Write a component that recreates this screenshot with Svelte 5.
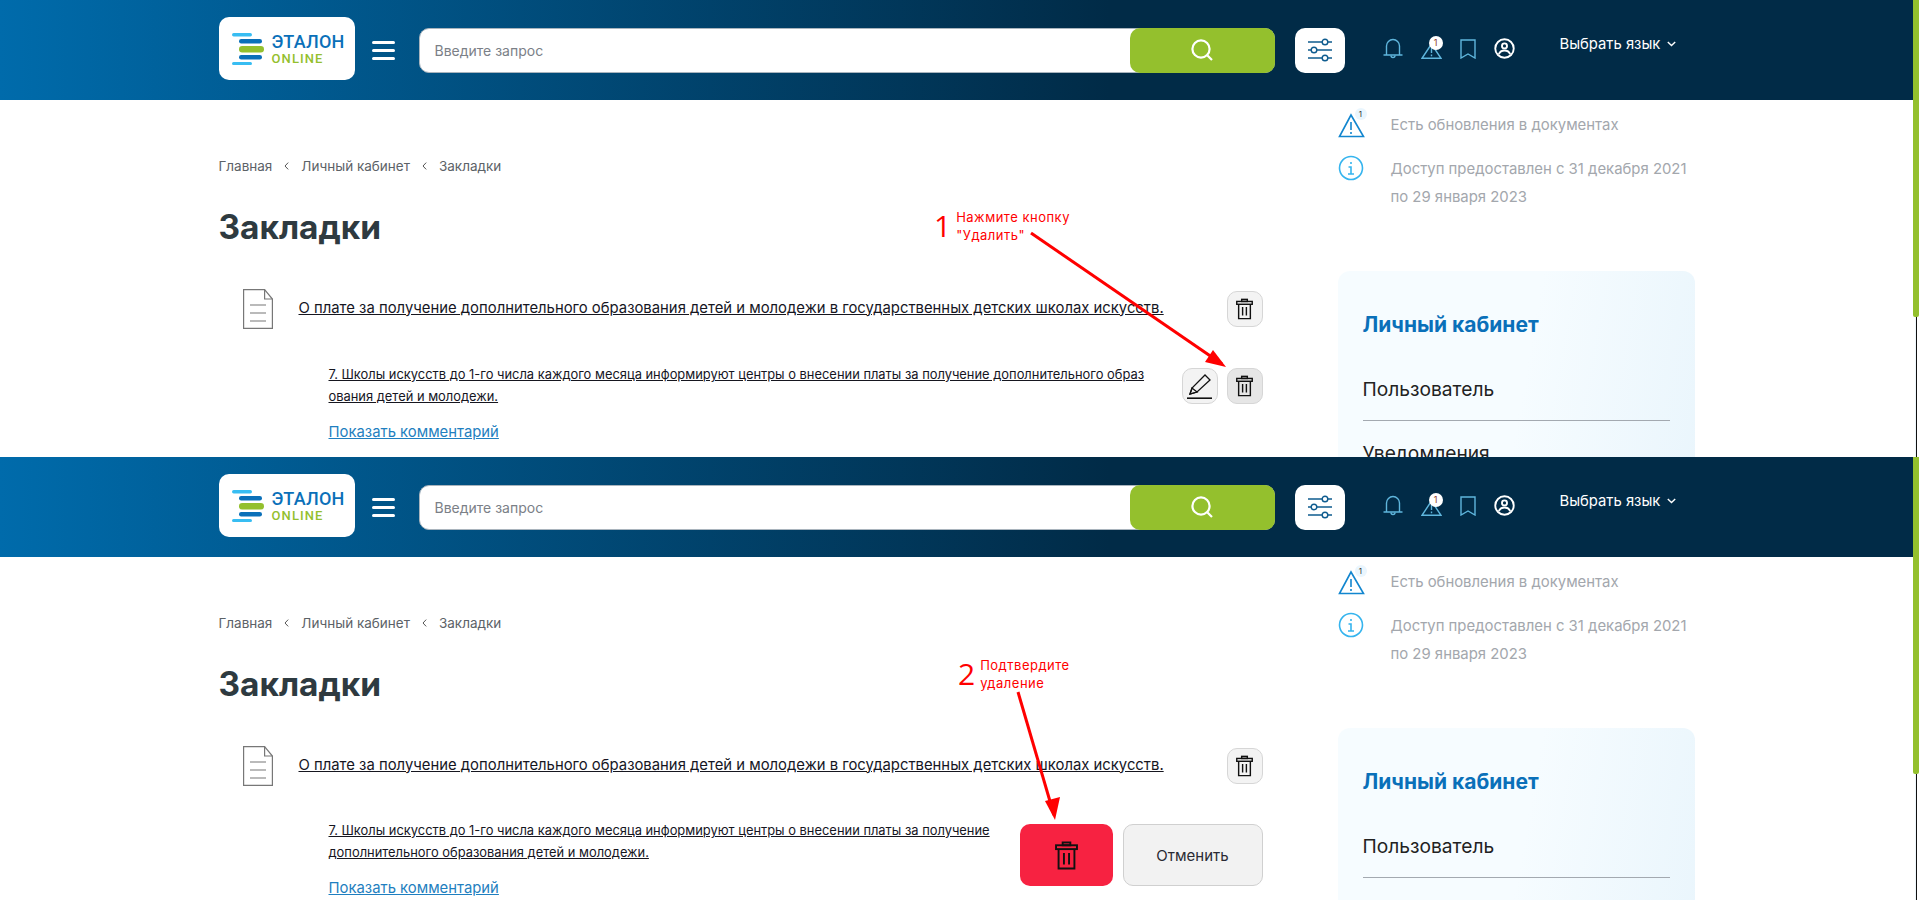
<script>
    const panels = [
        {
            id: "one",
            num: "1",
            hint: ["Нажмите кнопку", '"Удалить"'],
            confirm: false,
            arrow: { x1: 1031, y1: 233, x2: 1222, y2: 364, head: "1226,367 1205,362 1213,350" },
        },
        {
            id: "two",
            num: "2",
            hint: ["Подтвердите", "удаление"],
            confirm: true,
            arrow: { x1: 1018, y1: 235, x2: 1054, y2: 358, head: "1055,363 1045,344 1060,340" },
        },
    ];
    const subText =
        "7. Школы искусств до 1-го числа каждого месяца информируют центры о внесении платы за получение дополнительного образования детей и молодежи.";
</script>

{#snippet trash(w, h)}
    <svg width={w} height={h} viewBox="0 0 18 22" fill="none" stroke="currentColor" stroke-width="1.5">
        <rect x="6" y="0.8" width="6" height="2.2" />
        <rect x="0.8" y="3" width="16.4" height="3" />
        <path d="M2.8 6v15.2h12.4V6" />
        <path d="M7 9v9M11 9v9" />
    </svg>
{/snippet}

{#each panels as p}
    <section class="shot {p.id}">
        <div class="view">
            <header class="topbar">
                <div class="topbar-inner">
                    <div class="logo">
                        <svg class="logo-mark" width="32" height="32" viewBox="0 0 32 32">
                            <rect x="0" y="0" width="20" height="3.5" rx="1.7" fill="#38bdf2" />
                            <rect x="7" y="6" width="23" height="4.5" rx="2.2" fill="#0a70b9" />
                            <rect x="7" y="13" width="25" height="6.5" rx="3.2" fill="#94c02d" />
                            <rect x="7" y="22" width="23" height="4.5" rx="2.2" fill="#0a70b9" />
                            <rect x="0" y="29" width="20" height="3" rx="1.5" fill="#38bdf2" />
                        </svg>
                        <div class="logo-text">
                            <span class="logo-top">ЭТАЛОН</span>
                            <span class="logo-sub">ONLINE</span>
                        </div>
                    </div>
                    <div class="burger"><i></i><i></i><i></i></div>
                    <div class="search">
                        <span class="search-input">Введите запрос</span>
                        <div class="search-btn">
                            <svg width="24" height="24" viewBox="0 0 24 24" fill="none" stroke="#fff" stroke-width="2.2">
                                <circle cx="11" cy="11" r="8.6" />
                                <path d="M17.5 17.5l4.5 4.5" />
                            </svg>
                        </div>
                    </div>
                    <div class="filter">
                        <svg width="26" height="24" viewBox="0 0 26 24" fill="none" stroke="#0f5c8f" stroke-width="1.4">
                            <path d="M1 4h14M21 4h4M1 12h3M10 12h15M1 20h14M21 20h4" />
                            <circle cx="18" cy="4" r="2.8" />
                            <circle cx="7" cy="12" r="2.8" />
                            <circle cx="18" cy="20" r="2.8" />
                        </svg>
                    </div>
                    <div class="tools">
                        <svg width="20" height="21" viewBox="0 0 20 21" fill="none" stroke="#5fb6dd" stroke-width="1.4">
                            <path d="M3.5 17V8a6.5 6.5 0 0 1 13 0v9M0.5 17h19" />
                            <path d="M8 17.5a2 2 0 0 0 4 0" />
                        </svg>
                        <div class="warn">
                            <svg width="21" height="20" viewBox="0 0 21 20" fill="none" stroke="#5fb6dd" stroke-width="1.4">
                                <path d="M10.5 5L1 19.3h19z" />
                                <path d="M10.5 9v5M10.5 15.5v1.8" />
                            </svg>
                            <span class="warn-badge">1</span>
                        </div>
                        <svg width="16" height="20" viewBox="0 0 16 20" fill="none" stroke="#5fb6dd" stroke-width="1.4">
                            <path d="M1 1h14v18l-7-4-7 4z" />
                        </svg>
                        <svg width="21" height="21" viewBox="0 0 20 20" fill="none" stroke="#fff" stroke-width="1.8">
                            <circle cx="10" cy="10" r="8.8" />
                            <circle cx="10" cy="7.5" r="2.4" />
                            <path d="M4.6 15.5c1-2.6 2.8-3.6 5.4-3.6s4.4 1 5.4 3.6" />
                        </svg>
                    </div>
                    <div class="lang">
                        Выбрать язык
                        <svg width="9" height="6" viewBox="0 0 9 6" fill="none" stroke="#fff" stroke-width="1.4">
                            <path d="M0.8 1l3.7 3.6L8.2 1" />
                        </svg>
                    </div>
                </div>
            </header>

            <div class="columns">
                <main class="main">
                    <nav class="crumbs">
                        <span>Главная</span>
                        <svg width="5" height="8" viewBox="0 0 5 8" fill="none" stroke="#555" stroke-width="1"><path d="M4.2 0.6L1 4l3.2 3.4" /></svg>
                        <span>Личный кабинет</span>
                        <svg width="5" height="8" viewBox="0 0 5 8" fill="none" stroke="#555" stroke-width="1"><path d="M4.2 0.6L1 4l3.2 3.4" /></svg>
                        <span>Закладки</span>
                    </nav>
                    <h1>Закладки</h1>

                    <div class="doc-row">
                        <svg class="doc-icon" width="30" height="40" viewBox="0 0 30 40" fill="none" stroke="#777" stroke-width="1.2">
                            <path d="M0.6 0.6h21l7.8 9.4v29.4H0.6z" />
                            <path d="M21.6 0.6v9.4h7.8" />
                            <path d="M7 16h16M7 24h16M7 32h16" />
                        </svg>
                        <a class="doc-link">О плате за получение дополнительного образования детей и молодежи в государственных детских школах искусств.</a>
                        <button class="icon-btn">{@render trash(17, 22)}</button>
                    </div>

                    <div class="sub-row" class:confirm={p.confirm}>
                        <div class="sub-body">
                            <a class="sub-link">{subText}</a>
                            <a class="show-comment">Показать комментарий</a>
                        </div>
                        {#if p.confirm}
                            <div class="confirm-btns">
                                <button class="del-btn">{@render trash(23, 29)}</button>
                                <button class="cancel-btn">Отменить</button>
                            </div>
                        {:else}
                            <div class="row-btns">
                                <button class="icon-btn">
                                    <svg width="25" height="26" viewBox="0 0 25 26" fill="none" stroke="#111" stroke-width="1.3">
                                        <path d="M3 21l2-6L18 2l5 5-13 12z" />
                                        <path d="M3 21l2-6 5 4z" />
                                        <path d="M0 25.2h25" stroke-width="1.6" />
                                    </svg>
                                </button>
                                <button class="icon-btn active">{@render trash(17, 22)}</button>
                            </div>
                        {/if}
                    </div>
                </main>

                <aside class="side">
                    <div class="notice">
                        <div class="notice-icon">
                            <svg width="27" height="26" viewBox="0 0 27 26" fill="none" stroke="#1286cf" stroke-width="1.6">
                                <path d="M13 3L1.5 24.5h24z" />
                                <path d="M13 10v8M13 20v2" />
                            </svg>
                            <span class="notice-badge">1</span>
                        </div>
                        <span>Есть обновления в документах</span>
                    </div>
                    <div class="notice info">
                        <div class="notice-icon">
                            <svg width="26" height="26" viewBox="0 0 26 26" fill="none" stroke="#35b4ee" stroke-width="1.6">
                                <circle cx="13" cy="13" r="11.5" />
                                <path d="M13 7v2M10.5 12H13v7M10 19h6" />
                            </svg>
                        </div>
                        <span>Доступ предоставлен с 31 декабря 2021<br />по 29 января 2023</span>
                    </div>
                    <div class="card">
                        <h2>Личный кабинет</h2>
                        <div class="card-item">Пользователь</div>
                        <div class="card-item">Уведомления</div>
                    </div>
                </aside>
            </div>
        </div>

        <div class="scrollbar"><div class="thumb"></div></div>

        <!-- annotations drawn on top of the page -->
        <div class="note">
            <span class="note-num">{p.num}</span>
            <span class="note-text">{p.hint[0]}<br />{p.hint[1]}</span>
        </div>
        <svg class="arrow" width="1919" height="457">
            <line x1={p.arrow.x1} y1={p.arrow.y1} x2={p.arrow.x2} y2={p.arrow.y2} stroke="#f00" stroke-width="3" />
            <polygon points={p.arrow.head} fill="#f00" />
        </svg>
    </section>
{/each}

<style>
    :global(body) {
        margin: 0;
        background: #fff;
        font-family: Inter, "Noto Sans", sans-serif;
    }

    .shot {
        position: relative;
        display: flex;
        overflow: hidden;
        width: 1919px;
    }
    .shot.one {
        height: 457px;
    }
    .shot.two {
        height: 443px;
    }
    .view {
        flex: 1;
        min-width: 0;
    }

    /* scrollbar */
    .scrollbar {
        width: 6px;
        background: linear-gradient(90deg, #fff 0 2px, #eef6fb 2px 3px, #111 3px 4.5px, #fff 4.5px);
    }
    .thumb {
        height: 317px;
        background: #94c02d;
        border-radius: 0 0 2px 2px;
    }

    /* top bar */
    .topbar {
        height: 100px;
        background: linear-gradient(90deg, #006bab 0, #012b47 58%);
    }
    .topbar-inner {
        width: 1476px;
        height: 100px;
        margin: 0 auto;
        display: flex;
        align-items: center;
    }
    .logo {
        width: 136px;
        height: 63px;
        margin-top: -3px;
        background: #fff;
        border-radius: 10px;
        display: flex;
        align-items: center;
        gap: 8px;
        padding-left: 13px;
        box-sizing: border-box;
    }
    .logo-text {
        display: flex;
        flex-direction: column;
        line-height: 1;
    }
    .logo-top {
        font-family: Roboto, sans-serif;
        font-weight: 500;
        font-size: 18px;
        color: #0a70b9;
        letter-spacing: 0.2px;
    }
    .logo-sub {
        font-family: Roboto, sans-serif;
        font-weight: 500;
        font-size: 13px;
        letter-spacing: 1.1px;
        color: #94c02d;
        margin-top: 1px;
    }
    .burger {
        width: 23px;
        margin-left: 17px;
        display: flex;
        flex-direction: column;
        gap: 5px;
    }
    .burger i {
        height: 3px;
        border-radius: 2px;
        background: #fff;
    }
    .search {
        width: 856px;
        height: 45px;
        margin-left: 24px;
        display: flex;
        align-items: stretch;
        background: #fff;
        border: 1px solid #a9b4bd;
        border-radius: 10px;
        box-sizing: border-box;
    }
    .search-input {
        flex: 1;
        align-self: center;
        padding-left: 15px;
        font-size: 14px;
        color: #7b8087;
    }
    .search-btn {
        width: 145px;
        margin: -1px;
        background: #94c02d;
        border-radius: 10px;
        display: flex;
        align-items: center;
        justify-content: center;
    }
    .filter {
        width: 50px;
        height: 45px;
        margin-left: 20px;
        background: #fff;
        border-radius: 10px;
        display: flex;
        align-items: center;
        justify-content: center;
    }
    .tools {
        margin-left: 38px;
        display: flex;
        align-items: center;
        gap: 18px;
        margin-top: -3px;
    }
    .warn {
        position: relative;
        height: 20px;
    }
    .warn-badge {
        position: absolute;
        top: -3px;
        right: -1px;
        width: 14px;
        height: 14px;
        border-radius: 50%;
        background: #fff;
        color: #8a3b2a;
        font-size: 9px;
        line-height: 14px;
        text-align: center;
    }
    .lang {
        margin-left: 45px;
        margin-bottom: 12px;
        color: #fff;
        font-size: 14.8px;
        display: flex;
        align-items: center;
        gap: 7px;
        white-space: nowrap;
    }

    /* page body */
    .columns {
        width: 1476px;
        margin: 0 auto;
        display: flex;
        justify-content: space-between;
    }
    .main {
        width: 1044px;
        padding-top: 58px;
    }
    .crumbs {
        display: flex;
        align-items: center;
        gap: 12px;
        height: 16px;
        font-size: 13.5px;
        color: #5c6267;
    }
    h1 {
        margin: 31px 0 0;
        height: 52px;
        font-size: 33.4px;
        line-height: 44px;
        font-weight: 700;
        color: #2e3a40;
    }
    .doc-row {
        display: flex;
        align-items: center;
        height: 44px;
        margin-top: 30px;
        padding-left: 24px;
    }
    .doc-link {
        flex: 1;
        margin: 0 0 3px 26px;
        font-size: 14.85px;
        color: #16161f;
        text-decoration: underline;
        white-space: nowrap;
    }
    .icon-btn {
        width: 36px;
        height: 36px;
        padding: 0;
        border: 1px solid #d6d6d6;
        border-radius: 10px;
        background: #f3f3f3;
        color: #111;
        display: flex;
        align-items: center;
        justify-content: center;
    }
    .icon-btn.active {
        background: #e6e6e6;
    }
    .sub-row {
        display: flex;
        margin-top: 33px;
        padding-left: 110px;
    }
    .sub-row.confirm {
        margin-top: 32px;
    }
    .sub-body {
        width: 820px;
    }
    .confirm .sub-body {
        width: 680px;
    }
    .sub-link {
        display: block;
        font-size: 12.9px;
        line-height: 22px;
        color: #16161f;
        text-decoration: underline;
        word-break: break-all;
    }
    .confirm .sub-link {
        word-break: normal;
    }
    .show-comment {
        display: block;
        margin-top: 15px;
        font-size: 14.85px;
        color: #1f7fc0;
        text-decoration: underline;
    }
    .row-btns {
        margin-left: auto;
        margin-top: 4px;
        display: flex;
        gap: 9px;
    }
    .confirm-btns {
        margin-left: auto;
        display: flex;
        gap: 10px;
        margin-top: 4px;
    }
    .del-btn {
        width: 93px;
        height: 62px;
        padding: 0;
        border: 0;
        border-radius: 10px;
        background: #f72241;
        color: #111;
        display: flex;
        align-items: center;
        justify-content: center;
    }
    .cancel-btn {
        width: 140px;
        height: 62px;
        border: 1px solid #d0d0d0;
        border-radius: 10px;
        background: #f2f2f2;
        color: #2a2a33;
        font-family: Inter, sans-serif;
        font-size: 15px;
    }

    /* right column */
    .side {
        width: 357px;
        padding-top: 11px;
        padding-left: 12px;
        margin-left: -12px;
    }
    .notice {
        display: flex;
        align-items: center;
        gap: 26px;
        font-size: 14.9px;
        line-height: 28px;
        color: #a3a7ad;
    }
    .notice.info {
        margin-top: 16px;
        align-items: flex-start;
    }
    .notice-icon {
        position: relative;
        width: 27px;
        height: 26px;
        flex: none;
    }
    .notice-badge {
        position: absolute;
        top: -4px;
        right: -2px;
        width: 12px;
        height: 12px;
        border-radius: 50%;
        background: #eaf6fe;
        color: #333;
        font-size: 8px;
        line-height: 12px;
        text-align: center;
    }
    .card {
        margin-top: 60px;
        height: 300px;
        padding: 0 25px;
        background: linear-gradient(100deg, #f6fcff 50%, #e9f5fc);
        border-radius: 12px;
        overflow: hidden;
    }
    h2 {
        margin: 0;
        padding-top: 42px;
        font-size: 21px;
        line-height: 24px;
        font-weight: 700;
        color: #0a70b9;
    }
    .card-item {
        padding: 40px 0 19px;
        border-bottom: 1px solid #a3a9b0;
        font-size: 19.2px;
        line-height: 24px;
        color: #222;
    }
    .card-item + .card-item {
        padding-top: 20px;
    }

    /* annotations */
    .note {
        position: absolute;
        left: 934px;
        top: 206px;
        display: flex;
        align-items: center;
        gap: 5px;
        color: #f00;
    }
    .two .note {
        left: 958px;
        top: 197px;
    }
    .note-num {
        font-family: "Open Sans", sans-serif;
        font-size: 30px;
        line-height: 40px;
    }
    .note-text {
        font-size: 13px;
        line-height: 18px;
        letter-spacing: 0.5px;
    }
    .arrow {
        position: absolute;
        left: 0;
        top: 0;
        pointer-events: none;
    }
</style>
